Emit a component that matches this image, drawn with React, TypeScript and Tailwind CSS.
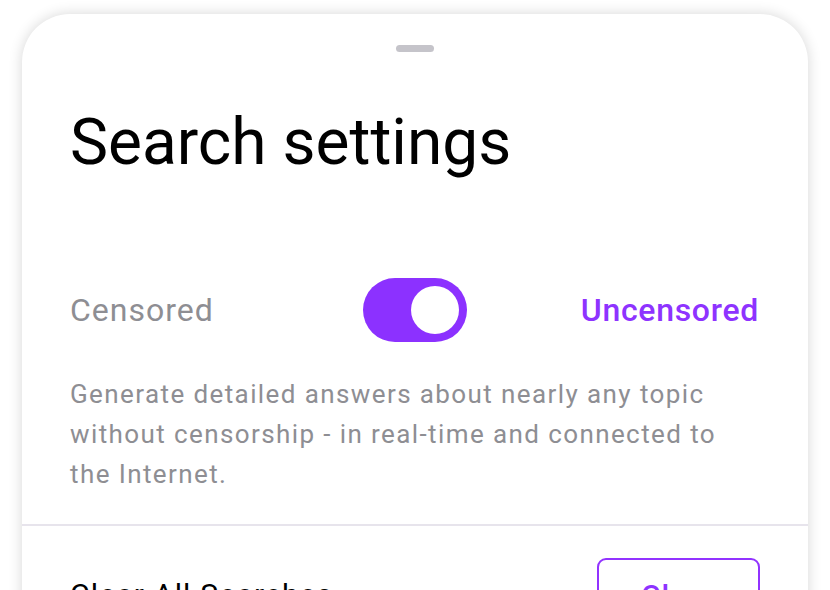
import { useState } from "react";

const SearchSettings = () => {
  const [uncensored, setUncensored] = useState(true);

  return (
    <div className="min-h-screen bg-white overflow-hidden font-['Roboto',sans-serif]">
      <div className="mx-[22px] mt-[14px] bg-white rounded-t-[48px] shadow-[0_0_14px_rgba(0,0,0,0.16)] min-h-[620px]">
        <div className="flex justify-center pt-[31px]">
          <div className="w-[38px] h-[7px] rounded-full bg-[#c5c4ca]" />
        </div>

        <div className="pl-[48px] pr-[49px]">
          <h1 className="mt-[53px] text-[64px] leading-[76px] text-black">
            Search settings
          </h1>

          <div className="mt-[97px] grid grid-cols-[1fr_auto_1fr] items-center">
            <span
              className={`justify-self-start text-[32px] leading-[40px] ${
                uncensored ? "text-[#8e8e93] tracking-[1px]" : "text-[#8e33ff] font-medium"
              }`}
            >
              Censored
            </span>
            <button
              onClick={() => setUncensored(!uncensored)}
              className={`ml-[1px] w-[104px] h-[64px] rounded-full flex items-center px-[8px] ${
                uncensored ? "bg-[#8c31ff] justify-end" : "bg-[#d1d1d6] justify-start"
              }`}
            >
              <span className="w-[48px] h-[48px] rounded-full bg-white" />
            </button>
            <span
              className={`justify-self-end text-[32px] leading-[40px] ${
                uncensored ? "text-[#8e33ff] font-medium tracking-[0.7px]" : "text-[#8e8e93]"
              }`}
            >
              Uncensored
            </span>
          </div>

          <p className="mt-[32px] text-[26px] leading-[40px] tracking-[1.4px] text-[#8e8e93]">
            Generate detailed answers about nearly any topic without censorship - in real-time and
            connected to the Internet.
          </p>
        </div>

        <div className="mt-[30px] h-[2px] bg-[#e7e4ec]" />

        <div className="pl-[48px] pr-[48px] pt-[32px] flex items-center justify-between">
          <span className="text-[30px] leading-[40px] tracking-[1.2px] text-black">
            Clear All Searches
          </span>
          <button className="w-[163px] h-[74px] rounded-[9px] border-2 border-[#9233ff] text-[#8e33ff] text-[30px] font-medium tracking-[1px]">
            Clear
          </button>
        </div>
      </div>
    </div>
  );
};

export default function App() {
  return <SearchSettings />;
}
